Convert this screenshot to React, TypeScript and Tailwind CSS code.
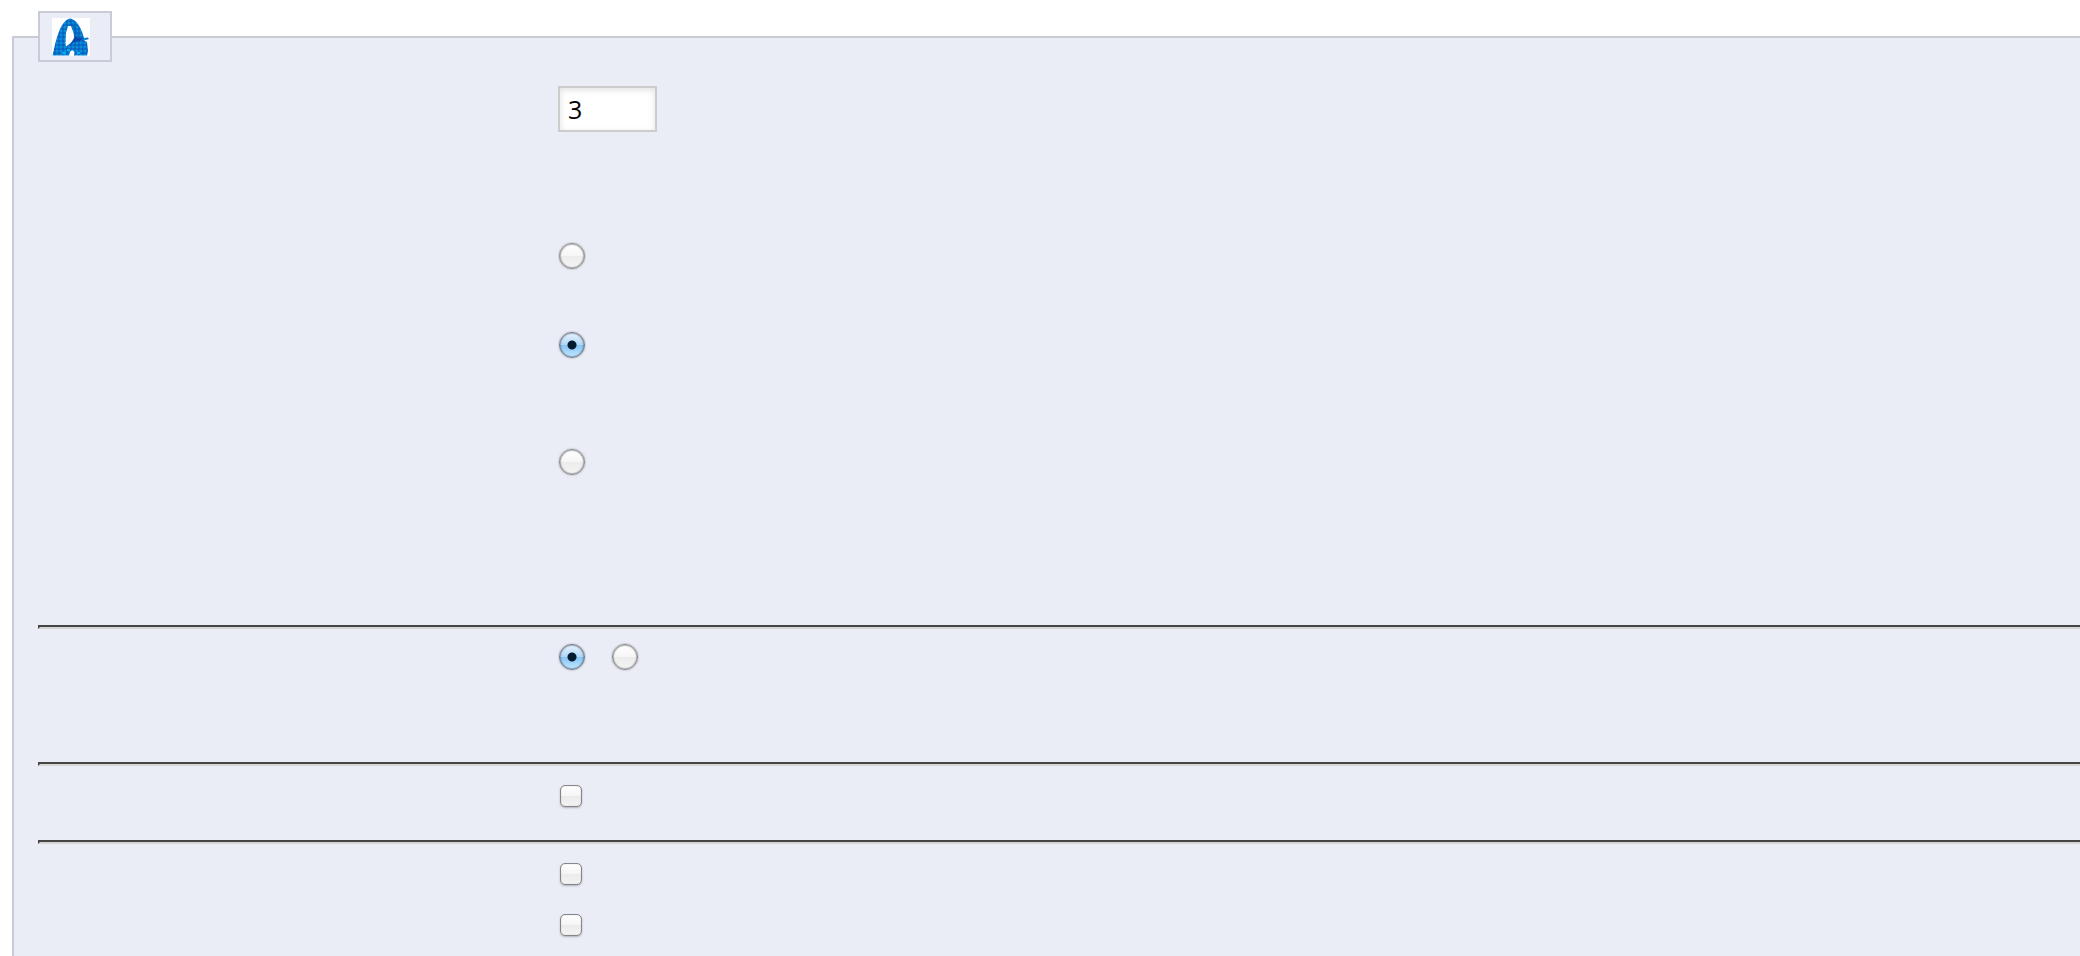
import { useState } from "react";
import type { InputHTMLAttributes, ReactNode } from "react";

type ControlProps = InputHTMLAttributes<HTMLInputElement>;

function Radio(props: ControlProps) {
  return (
    <input
      type="radio"
      className="ml-px block size-[26px] appearance-none rounded-full border border-[#88888e] bg-[linear-gradient(#ffffff,#f6f6f6_50%,#ececec_50%,#f5f5f5)] bg-origin-border shadow-[0_0_2px_rgba(0,0,0,0.35),inset_0_0_1px_1px_rgba(0,0,0,0.25)] checked:border-[#77778f] checked:bg-[radial-gradient(circle_at_center,#061b30_0,#061b30_4px,transparent_5px),linear-gradient(#eaf5fe,#b0d7f7_50%,#86c4f5_50%,#c3ebff)]"
      {...props}
    />
  );
}

function Checkbox(props: ControlProps) {
  return (
    <input
      type="checkbox"
      className="ml-0.5 block size-[22px] appearance-none rounded-[5px] border border-[#85858a] bg-[linear-gradient(#ffffff,#f5f5f5_50%,#ebebeb_50%,#f3f3f3)] shadow-[0_1px_2px_rgba(0,0,0,0.25),inset_0_0_1px_rgba(0,0,0,0.35)] checked:bg-[#86c4f5]"
      {...props}
    />
  );
}

function Row({ className, children }: { className: string; children: ReactNode }) {
  return (
    <div className={`grid grid-cols-[520px_1fr] ${className}`}>
      <div />
      <div className="flex gap-[26px]">{children}</div>
    </div>
  );
}

function Divider() {
  return (
    <hr className="h-1 border-2 border-r-0 border-t-[#454545] border-b-[#d6d6d6] border-l-[#454545]" />
  );
}

function Logo() {
  return (
    <svg viewBox="0 0 38 38" className="size-[38px] bg-white" aria-hidden="true">
      <defs>
        <pattern id="weave" width="4" height="4" patternUnits="userSpaceOnUse">
          <rect width="4" height="4" fill="#0873ce" />
          <rect x="0" y="0" width="2" height="2" fill="#0b8fd3" />
          <rect x="2" y="2" width="2" height="2" fill="#0762c0" />
        </pattern>
      </defs>
      <path
        d="M18.5 0.5 C14 1 11 5 8 11 C5 18 3 26 2 31 L0.5 37.5 H17 L18 34 L20 32 L22.5 34 L22 37.5 H35 L36 33 L35 24 L32 22.5 L37 21 L36 19.5 L32 20 C30 12 25.5 2 18.5 0.5 Z M16 8 L19 8 L21.5 15 L22.5 21 L18 25.5 L14 28.5 L13.5 25 L14 15 Z"
        fill="url(#weave)"
        fillRule="evenodd"
      />
      <path d="M23 18 L26 20 L31 20 L28 23 L22 24 L18 27 L21 22 Z" fill="#0646a6" />
      <path d="M19 3 L22 7 L26 14 L27 19 L24 18 L22 11 L18 6 Z" fill="#075fb5" opacity="0.5" />
      <path d="M10 34 H14 V36 H10 Z M15 31 H18 V33 H15 Z M25 34 H28 V36 H25 Z" fill="#08a9ed" />
    </svg>
  );
}

export default function App() {
  const [count, setCount] = useState("3");
  const [mode, setMode] = useState(1);
  const [enabled, setEnabled] = useState(true);

  return (
    <main className="min-h-screen overflow-hidden bg-white pt-[11px] pl-3">
      <fieldset className="min-h-[calc(100vh-11px)] border-2 border-r-0 border-b-0 border-[#c9cbd6] bg-[#eaedf5] pl-6">
        <legend className="border-2 border-[#c9cbd6] bg-[#eaedf5] pt-[5px] pr-5 pb-1 pl-3">
          <Logo />
        </legend>

        <Row className="pt-6">
          <input
            type="text"
            aria-label="Count"
            value={count}
            onChange={(e) => setCount(e.target.value)}
            className="h-[46px] w-[99px] border-2 border-[#cccccc] bg-white px-2 font-['Open_Sans',sans-serif] text-[25px] leading-8 text-black shadow-[inset_0_2px_6px_rgba(0,0,0,0.12)] outline-none"
          />
        </Row>
        <Row className="pt-[111px]">
          <Radio name="mode" aria-label="First mode" checked={mode === 0} onChange={() => setMode(0)} />
        </Row>
        <Row className="pt-[63px]">
          <Radio name="mode" aria-label="Second mode" checked={mode === 1} onChange={() => setMode(1)} />
        </Row>
        <Row className="pt-[91px] pb-[150px]">
          <Radio name="mode" aria-label="Third mode" checked={mode === 2} onChange={() => setMode(2)} />
        </Row>

        <Divider />
        <Row className="pt-[15px] pb-[92px]">
          <Radio name="enabled" aria-label="Yes" checked={enabled} onChange={() => setEnabled(true)} />
          <Radio name="enabled" aria-label="No" checked={!enabled} onChange={() => setEnabled(false)} />
        </Row>

        <Divider />
        <Row className="pt-[19px] pb-[33px]">
          <Checkbox aria-label="First option" />
        </Row>

        <Divider />
        <Row className="pt-[19px]">
          <Checkbox aria-label="Second option" />
        </Row>
        <Row className="pt-[29px]">
          <Checkbox aria-label="Third option" />
        </Row>
      </fieldset>
    </main>
  );
}
